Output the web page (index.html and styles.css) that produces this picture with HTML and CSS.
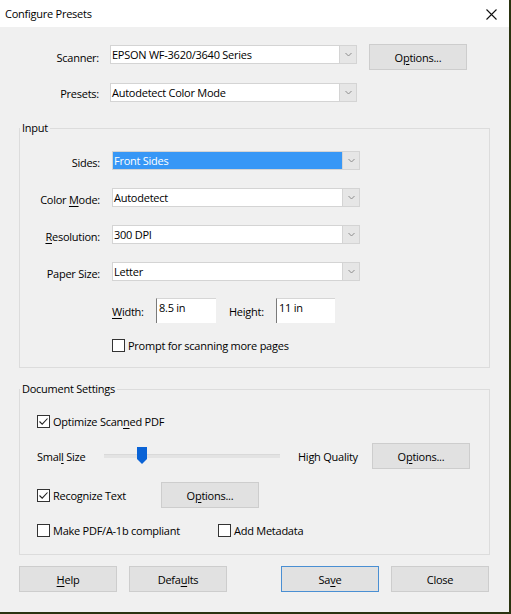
FILE: index.html
```html
<!DOCTYPE html>
<html lang="en">
<head>
    <meta charset="UTF-8">
    <meta name="viewport" content="width=device-width, initial-scale=1.0">
    <title>Configure Presets</title>
    <link rel="stylesheet" href="styles.css">
</head>
<body>

    <div class="dialog">
        <!-- Title Bar -->
        <div class="titlebar">
            <span class="title">Configure Presets</span>
            <svg class="close-x" width="11" height="11" viewBox="0 0 11 11">
                <path d="M0.5 0.5 L10.5 10.5 M10.5 0.5 L0.5 10.5" stroke="#111" stroke-width="1.1" fill="none"/>
            </svg>
        </div>

        <div class="row scan-row">
            <label class="label outer">Scanner:</label>
            <div class="combo outer-combo">
                <span class="combo-value">EPSON WF-3620/3640 Series</span>
                <span class="combo-arrow"><svg width="7" height="5" viewBox="0 0 7 5"><path d="M0.5 1 L3.5 4 L6.5 1" stroke="#8c8c8c" fill="none"/></svg></span>
            </div>
            <button class="btn scan-options">O<u>p</u>tions...</button>
        </div>

        <div class="row preset-row">
            <label class="label outer">Presets:</label>
            <div class="combo outer-combo">
                <span class="combo-value">Autodetect Color Mode</span>
                <span class="combo-arrow"><svg width="7" height="5" viewBox="0 0 7 5"><path d="M0.5 1 L3.5 4 L6.5 1" stroke="#8c8c8c" fill="none"/></svg></span>
            </div>
        </div>

        <!-- Input group -->
        <fieldset class="group input-group">
            <legend>Input</legend>

            <div class="row field-row first">
                <label class="label inner">Sides:</label>
                <div class="combo inner-combo">
                    <span class="combo-value selected">Front Sides</span>
                    <span class="combo-arrow"><svg width="7" height="5" viewBox="0 0 7 5"><path d="M0.5 1 L3.5 4 L6.5 1" stroke="#8c8c8c" fill="none"/></svg></span>
                </div>
            </div>

            <div class="row field-row">
                <label class="label inner">Color <u>M</u>ode:</label>
                <div class="combo inner-combo">
                    <span class="combo-value">Autodetect</span>
                    <span class="combo-arrow"><svg width="7" height="5" viewBox="0 0 7 5"><path d="M0.5 1 L3.5 4 L6.5 1" stroke="#8c8c8c" fill="none"/></svg></span>
                </div>
            </div>

            <div class="row field-row">
                <label class="label inner"><u>R</u>esolution:</label>
                <div class="combo inner-combo">
                    <span class="combo-value">300 DPI</span>
                    <span class="combo-arrow"><svg width="7" height="5" viewBox="0 0 7 5"><path d="M0.5 1 L3.5 4 L6.5 1" stroke="#8c8c8c" fill="none"/></svg></span>
                </div>
            </div>

            <div class="row field-row">
                <label class="label inner">Paper Size:</label>
                <div class="combo inner-combo">
                    <span class="combo-value">Letter</span>
                    <span class="combo-arrow"><svg width="7" height="5" viewBox="0 0 7 5"><path d="M0.5 1 L3.5 4 L6.5 1" stroke="#8c8c8c" fill="none"/></svg></span>
                </div>
            </div>

            <div class="row size-row">
                <label class="size-label width-label"><u>W</u>idth:</label>
                <div class="text-box width-box">8.5 in</div>
                <label class="size-label height-label">Height:</label>
                <div class="text-box height-box">11 in</div>
            </div>

            <div class="row check-row prompt-row">
                <span class="check"></span>
                <span class="check-text">Prompt for scanning more pages</span>
            </div>
        </fieldset>

        <!-- Document Settings group -->
        <fieldset class="group doc-group">
            <legend>Document Settings</legend>

            <div class="row check-row optimize-row">
                <span class="check checked"><svg width="11" height="11" viewBox="0 0 11 11"><path d="M1.5 5.5 L4.2 8.2 L9.5 2.5" stroke="#222" stroke-width="1.1" fill="none"/></svg></span>
                <span class="check-text">Optimize Scan<u>n</u>ed PDF</span>
            </div>

            <div class="row slider-row">
                <span class="slider-label">Smal<u>l</u> Size</span>
                <div class="track">
                    <svg class="thumb" width="10" height="17" viewBox="0 0 10 17"><polygon points="0,0 10,0 10,12 5,17 0,12" fill="#0a63d6"/></svg>
                </div>
                <span class="quality-label">High Quality</span>
                <button class="btn">O<u>p</u>tions...</button>
            </div>

            <div class="row recognize-row">
                <div class="check-item recognize-item">
                    <span class="check checked"><svg width="11" height="11" viewBox="0 0 11 11"><path d="M1.5 5.5 L4.2 8.2 L9.5 2.5" stroke="#222" stroke-width="1.1" fill="none"/></svg></span>
                    <span class="check-text">Recognize Text</span>
                </div>
                <button class="btn">O<u>p</u>tions...</button>
            </div>

            <div class="row pdfa-row">
                <div class="check-item pdfa-item">
                    <span class="check"></span>
                    <span class="check-text">Make PDF/A-1b compliant</span>
                </div>
                <div class="check-item">
                    <span class="check"></span>
                    <span class="check-text">Add Metadata</span>
                </div>
            </div>
        </fieldset>

        <!-- Footer buttons -->
        <div class="footer">
            <div class="btn-group">
                <button class="btn"><u>H</u>elp</button>
                <button class="btn">Defa<u>u</u>lts</button>
            </div>
            <div class="btn-group">
                <button class="btn default-btn">Sa<u>v</u>e</button>
                <button class="btn">Close</button>
            </div>
        </div>
    </div>

</body>
</html>
```

FILE: styles.css
```css
* {
    margin: 0;
    padding: 0;
    box-sizing: border-box;
}
body {
    font-family: "Open Sans", "Noto Sans", Arial, sans-serif;
    font-size: 11px;
    letter-spacing: -0.25px;
    color: #000;
    background: #f0f0f0;
}
u {
    text-decoration-thickness: 1px;
    text-underline-offset: 2px;
}
.dialog {
    width: 511px;
    height: 614px;
    background: #f0f0f0;
    border-right: 2px solid #2a3310;
    border-bottom: 2px solid #2a3310;
}
.titlebar {
    height: 27px;
    background: #fff;
    display: flex;
    justify-content: space-between;
    align-items: center;
    padding: 0 12px 0 5px;
}
.close-x {
    margin-top: 1px;
}
.row {
    display: flex;
    align-items: flex-start;
}
.label {
    text-align: right;
    line-height: 16px;
    flex-shrink: 0;
}
.label.outer {
    width: 99px;
}
.label.inner {
    width: 80px;
    padding-top: 4px;
}
.scan-row {
    margin-top: 17px;
    height: 26px;
}
.scan-row .label {
    padding-top: 6px;
}
.preset-row {
    margin-top: 13px;
    height: 19px;
}
.preset-row .label {
    padding-top: 3px;
}
.combo {
    display: flex;
    height: 19px;
    background: #fff;
    border: 1px solid #d4d4d4;
}
.outer-combo {
    width: 247px;
    margin-left: 11px;
}
.scan-row .outer-combo {
    margin-top: 1px;
}
.inner-combo {
    width: 248px;
    margin-left: 12px;
}
.combo-value {
    flex: 1;
    line-height: 17px;
    padding-left: 1px;
    white-space: nowrap;
}
.combo-value.selected {
    background: #3797f6;
    color: #fff;
}
.combo-arrow {
    width: 17px;
    background: #e6e6e6;
    border-left: 1px solid #d4d4d4;
    display: flex;
    align-items: center;
    justify-content: center;
}
.btn {
    font-family: inherit;
    font-size: 11px;
    letter-spacing: -0.25px;
    color: #000;
    width: 98px;
    height: 26px;
    background: #e1e1e1;
    border: 1px solid #cdcdcd;
    flex-shrink: 0;
}
.scan-options {
    margin-left: 12px;
}
.group {
    width: 471px;
    margin-left: 19px;
    border: 1px solid #dcdcdc;
}
.group legend {
    padding: 0 2px;
    line-height: 16px;
}
.input-group {
    margin-top: 18px;
    padding-bottom: 15px;
}
.field-row {
    height: 19px;
    margin-top: 18px;
}
.field-row.first {
    margin-top: 15px;
}
.size-row {
    margin-top: 17px;
    height: 25px;
    padding-left: 92px;
}
.size-label {
    line-height: 16px;
    padding-top: 6px;
}
.width-label {
    width: 44px;
}
.height-label {
    width: 47px;
    margin-left: 13px;
}
.text-box {
    height: 25px;
    background: #fff;
    border-left: 1px solid #7a7a7a;
    border-top: 1px solid #d6d6d6;
    line-height: 16px;
    padding: 1px 0 0 2px;
}
.width-box {
    width: 60px;
}
.height-box {
    width: 59px;
}
.check-row {
    align-items: center;
    height: 13px;
}
.prompt-row {
    margin-top: 16px;
    padding-left: 92px;
}
.check {
    width: 13px;
    height: 13px;
    border: 1px solid #333;
    background: #fff;
    display: inline-flex;
    align-items: center;
    justify-content: center;
    flex-shrink: 0;
}
.check-text {
    margin-left: 3px;
    white-space: nowrap;
}
.check-item {
    display: flex;
    align-items: center;
}
.doc-group {
    margin-top: 13px;
    padding-bottom: 17px;
}
.optimize-row {
    margin-top: 18px;
    padding-left: 17px;
}
.slider-row {
    margin-top: 15px;
    height: 26px;
    align-items: center;
    padding-left: 17px;
}
.slider-label {
    width: 67px;
}
.track {
    position: relative;
    width: 176px;
    height: 4px;
    background: #e3e3e3;
    border-top: 1px solid #d9d9d9;
}
.thumb {
    position: absolute;
    left: 33px;
    top: -8px;
}
.quality-label {
    width: 74px;
    margin-left: 18px;
}
.recognize-row {
    margin-top: 13px;
    height: 26px;
    align-items: center;
    padding-left: 17px;
}
.recognize-item {
    width: 124px;
}
.pdfa-row {
    margin-top: 16px;
    height: 13px;
    align-items: center;
    padding-left: 17px;
}
.pdfa-item {
    width: 181px;
}
.footer {
    display: flex;
    justify-content: space-between;
    margin: 11px 0 0 19px;
    width: 470px;
}
.btn-group {
    display: flex;
    gap: 12px;
}
.default-btn {
    border-color: #4a8fd3;
}
```
